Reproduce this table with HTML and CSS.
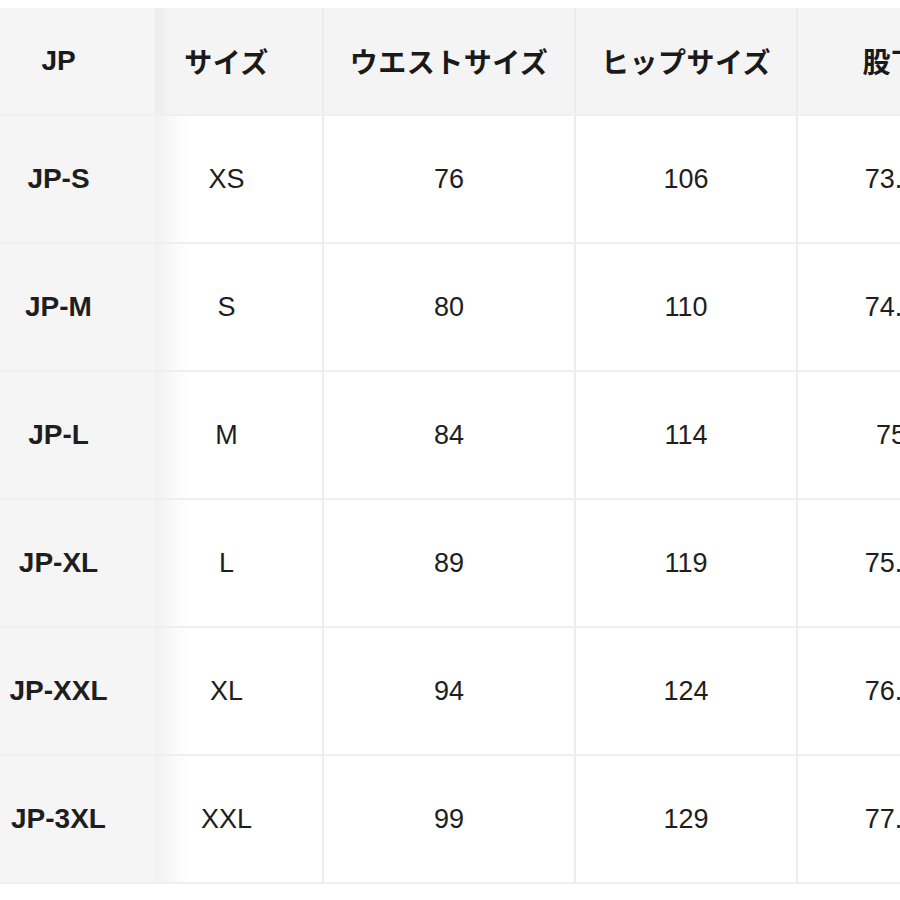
FILE: index.html
```html
<!DOCTYPE html>
<html lang="ja">
<head>
<meta charset="utf-8">
<link rel="stylesheet" href="styles.css">
</head>
<body>
<div class="wrap">
<table class="size-table">
  <colgroup>
    <col class="c1"><col class="c2"><col class="c3"><col class="c4"><col class="c5">
  </colgroup>
  <thead>
    <tr>
      <th class="jp">JP</th>
      <th class="sz">サイズ</th>
      <th>ウエストサイズ</th>
      <th>ヒップサイズ</th>
      <th class="last">股下</th>
    </tr>
  </thead>
  <tbody>
    <tr><td class="jp">JP-S</td><td class="sz">XS</td><td>76</td><td>106</td><td class="last">73.5</td></tr>
    <tr><td class="jp">JP-M</td><td class="sz">S</td><td>80</td><td>110</td><td class="last">74.5</td></tr>
    <tr><td class="jp">JP-L</td><td class="sz">M</td><td>84</td><td>114</td><td class="last">75</td></tr>
    <tr><td class="jp">JP-XL</td><td class="sz">L</td><td>89</td><td>119</td><td class="last">75.5</td></tr>
    <tr><td class="jp">JP-XXL</td><td class="sz">XL</td><td>94</td><td>124</td><td class="last">76.5</td></tr>
    <tr><td class="jp">JP-3XL</td><td class="sz">XXL</td><td>99</td><td>129</td><td class="last">77.5</td></tr>
  </tbody>
</table>
</div>
</body>
</html>
```
FILE: styles.css
```css
html, body {
  margin: 0;
  padding: 0;
  background: #ffffff;
}
body {
  padding-top: 8px;
  overflow: hidden;
  width: 900px;
  height: 892px;
}
.wrap {
  width: 900px;
  overflow: hidden;
}
.size-table {
  table-layout: fixed;
  border-collapse: collapse;
  width: 1000px;
  font-family: "Liberation Sans", Arial, "Noto Sans CJK JP", sans-serif;
  color: #1e1e1e;
}
.c1 { width: 155px; }
.c2 { width: 168px; }
.c3 { width: 252px; }
.c4 { width: 222px; }
.c5 { width: 203px; }

.size-table th,
.size-table td {
  text-align: center;
  vertical-align: middle;
  padding: 0;
  border-right: 2px solid #ececec;
  border-bottom: 2px solid #efefef;
}
.size-table thead tr { height: 107px; }
.size-table tbody tr { height: 128px; }

.size-table th {
  background: #f4f4f4;
  font-family: "Liberation Sans", Arial, "Noto Sans CJK JP", sans-serif;
  font-size: 28px;
  font-weight: 700;
  color: #1a1a1a;
  letter-spacing: 0.5px;
}
.size-table th.jp {
  font-size: 28px;
  letter-spacing: 0;
}
.size-table td {
  font-size: 27px;
  font-weight: 400;
}
.size-table .jp {
  background: #f5f5f5;
  border-right: none;
  border-bottom-color: #f0f0f0;
  padding-right: 38px;
}
.size-table td.jp {
  font-weight: 700;
  font-size: 28px;
}
.size-table .sz {
  padding-right: 24px;
}
.size-table .last {
  padding-right: 15px;
}
.size-table th.sz {
  background: linear-gradient(to right, #ececec 0px, #f4f4f4 14px, #f4f4f4 100%);
}
.size-table td.sz {
  background: linear-gradient(to right, #f1f1f1 0px, #fafafa 20px, #ffffff 36px, #ffffff 100%);
}
```
